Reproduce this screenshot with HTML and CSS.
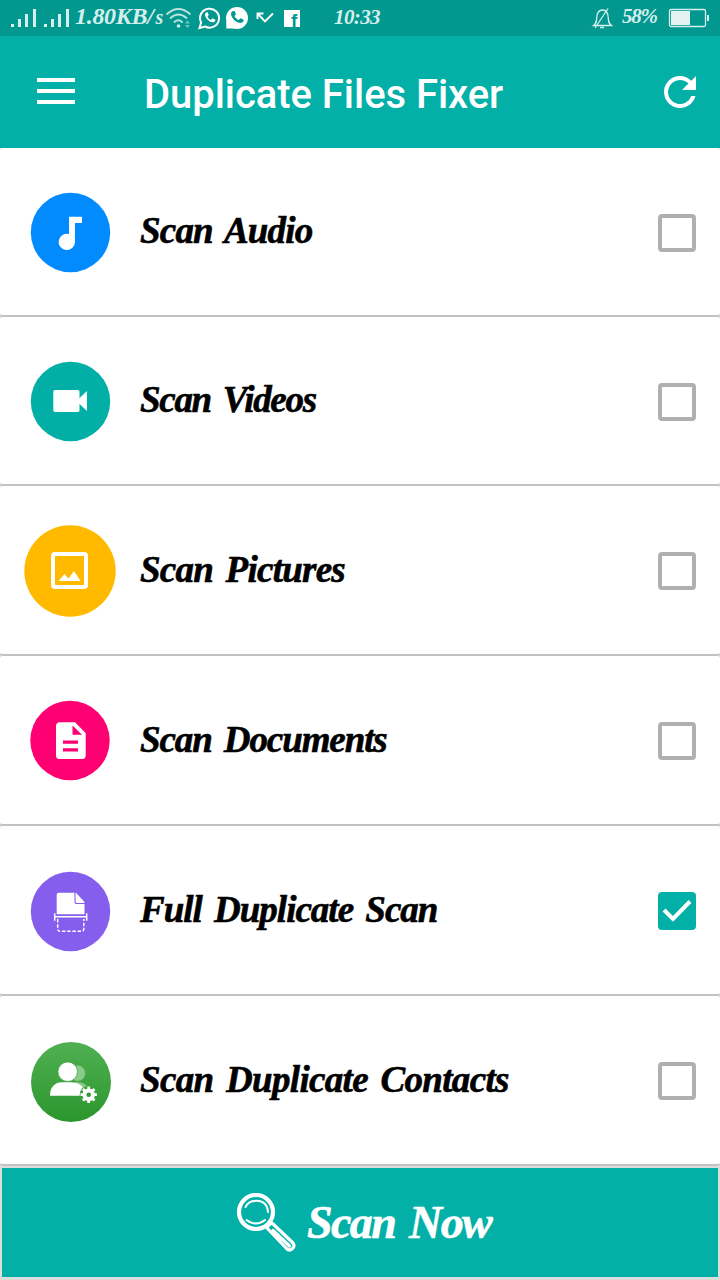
FILE: index.html
```
<!DOCTYPE html>
<html lang="en">
<head>
    <meta charset="UTF-8">
    <title>Duplicate Files Fixer</title>
    <link rel="stylesheet" href="styles.css">
</head>
<body>
    <div class="status-bar">
        <svg class="signals" width="75" height="36" fill="#d5efed">
            <path d="M11 24h3v3h-3zM18 19h3v8h-3zM25 14h3v13h-3zM33 9h3v18h-3zM44 24h3v3h-3zM51 19h3v8h-3zM58 14h3v13h-3zM66 9h3v18h-3z"/>
        </svg>
        <span class="speed">1.80KB/<small>s</small></span>
        <svg class="notifications" width="140" height="36" fill="none">
            <!-- wifi -->
            <g stroke="#b9e3df" stroke-width="1.8" stroke-linecap="round">
                <path d="M3 14Q14.500 4 26 14M6.500 18Q14.500 11 22.500 18M10.500 22Q14.500 18.500 18 22"/>
            </g>
            <circle cx="14.500" cy="26" r="1.800" fill="#d5efed"/>
            <path d="M21 23.500l2.500-3 2.500 3zM21 25l2.500 3 2.500-3z" fill="#6fc3bc"/>
            <!-- whatsapp -->
            <path d="M35.500 28l1.600-5.500A9.500 9.500 0 1 1 41 26.500z" stroke="#fff" stroke-width="2"/>
            <path d="M41.500 13c-2.500 3 4.500 11 8.500 9 2-1 1.500-2 1-2.500l-2.500-1.200-1.800 1.600c-1.500-.5-2.700-2-3.200-3.300l1.200-1.600-1-2.500c-.6-.5-1.600-.3-2.200.5z" fill="#fff"/>
            <!-- phone -->
            <circle cx="73" cy="18" r="11" fill="#fff"/>
            <path d="M62.300 28.500v-8l8 8z" fill="#fff"/>
            <path d="M67.500 12c-2.500 4 5.500 13 10.500 10.500 2-1 2-2.500 1.200-3l-2.700-1.300-2 1.800c-1.700-.6-3.500-2.400-4-4l1.500-1.700-1.200-3c-.8-.6-2.300-.2-3.300.7z" fill="#02978f"/>
            <!-- missed call -->
            <path d="M93.500 19v-5.500h6M94 14l7 7.500 8-8" stroke="#fff" stroke-width="1.900"/>
            <rect x="120" y="10" width="16" height="17" fill="#fff"/>
            <text class="fb" x="127" y="27" fill="#02978f">f</text>
        </svg>
        <span class="clock">10:33</span>
        <svg class="bell" width="26" height="36" fill="none" stroke="#d5efed" stroke-width="1.300">
            <path d="M4.500 25.500c3-2 3-4 3.300-8 .3-5 2.700-7.500 5.700-7.500s5.400 2.500 5.700 7.500c.3 4 .3 6 3.300 8zM6 28L19 8.500M11 27.500h4"/>
        </svg>
        <span class="percent">58%</span>
        <svg class="battery" width="42" height="36">
            <rect x="1.500" y="9.500" width="36" height="17" rx="1.500" fill="none" stroke="#d5efed" stroke-width="1.300"/>
            <path d="M3 11h19v14H3z" fill="#e4f3f2"/>
            <path d="M39 15h2v6h-2z" fill="#d5efed"/>
        </svg>
    </div>

    <div class="toolbar">
        <svg class="menu" width="38" height="26" fill="#fff">
            <path d="M0 0h38v4H0zM0 11h38v4H0zM0 22h38v4H0z"/>
        </svg>
        <h1>Duplicate Files Fixer</h1>
        <svg class="refresh" width="32" height="32" viewBox="4 4 16 16" fill="#fff">
            <path d="M17.650 6.350A7.958 7.958 0 0 0 12 4a8 8 0 1 0 7.730 10h-2.080A6 6 0 1 1 12 6c1.660 0 3.140.69 4.220 1.780L13 11h7V4z"/>
        </svg>
    </div>

    <div class="list">
        <div class="row">
            <svg class="icon" width="92" height="92" fill="#fff">
                <circle cx="46.500" cy="46.500" r="39.700" fill="#028aff"/>
                <path d="M45 30.700h13v6.300h-7v19a8.200 8.200 0 1 1-6-8z"/>
            </svg>
            <span class="label audio">Scan Audio</span>
            <span class="check"></span>
        </div>
        <div class="row">
            <svg class="icon" width="92" height="92" fill="#fff">
                <circle cx="46.500" cy="46.500" r="39.700" fill="#02afa7"/>
                <rect x="29.300" y="35" width="26.200" height="22" rx="1.800"/>
                <path d="M63 36v20l-8-7.500v-5z"/>
            </svg>
            <span class="label videos">Scan Videos</span>
            <span class="check"></span>
        </div>
        <div class="row tall">
            <svg class="icon" width="92" height="94" fill="#fff">
                <circle cx="46" cy="47" r="45.700" fill="#ffba00"/>
                <rect x="29" y="30" width="33" height="33" rx="2" fill="none" stroke="#fff" stroke-width="4"/>
                <path d="M34.500 57l6-7 4 4.500 5.500-7.500 6.500 10z"/>
            </svg>
            <span class="label pictures">Scan Pictures</span>
            <span class="check"></span>
        </div>
        <div class="row tall">
            <svg class="icon" width="92" height="92" fill="#fff">
                <circle cx="46" cy="46.500" r="39.700" fill="#ff0073"/>
                <path d="M35.500 28.300H51L61.700 39v22.500a3.500 3.500 0 0 1-3.500 3.500H35.500a3.500 3.500 0 0 1-3.500-3.500V32a3.500 3.500 0 0 1 3.500-3.700z"/>
                <path d="M48.500 31.500v9.300H58zM39 46.600h15v3.200H39zM39 54.300h15v3.200H39z" fill="#ff0073"/>
            </svg>
            <span class="label documents">Scan Documents</span>
            <span class="check"></span>
        </div>
        <div class="row tall">
            <svg class="icon" width="92" height="92" fill="#fff">
                <circle cx="46.500" cy="47.500" r="39.700" fill="#855eed"/>
                <path d="M34.700 28.700H52L60.500 38v12.300H32.700V30.700a2 2 0 0 1 2-2z"/>
                <path d="M51 28v9.500q0 2 2 2h8" fill="none" stroke="#855eed" stroke-width="1.100"/>
                <path d="M30.700 49.300v7.500M62.700 49.300v7.500M30.700 52.800h32" fill="none" stroke="#fff" stroke-width="1.500"/>
                <path d="M33.700 55v10q0 2.300 2.300 2.300h21.500q2.300 0 2.300-2.300V55" fill="none" stroke="#fff" stroke-width="1.500" stroke-dasharray="3.500 1.700"/>
            </svg>
            <span class="label full">Full Duplicate Scan</span>
            <span class="check checked">
                <svg width="38" height="38" fill="none" stroke="#fff" stroke-width="4"><path d="M6 18l9 9L32 9.500"/></svg>
            </span>
        </div>
        <div class="row tall">
            <svg class="icon" width="92" height="92" fill="#fff">
                <defs>
                    <linearGradient id="green" x1="0" y1="0" x2="0" y2="1">
                        <stop offset="0" stop-color="#50b052"/>
                        <stop offset="1" stop-color="#2b962d"/>
                    </linearGradient>
                </defs>
                <circle cx="47" cy="48" r="40" fill="url(#green)"/>
                <g fill="#89cb8a">
                    <circle cx="53.500" cy="39.300" r="7.700"/>
                    <path d="M51 48q10-1 14 7l-8 2z"/>
                </g>
                <circle cx="43.700" cy="37.700" r="9.800" stroke="#3fa541" stroke-width=".8"/>
                <path d="M26 61.800c0-9 5-13.500 12-13.500h9c7 0 11 3 12.500 7v6.500z"/>
                <circle cx="64.700" cy="60.700" r="9" fill="#37a039"/>
                <circle cx="64.700" cy="60.700" r="4.300" fill="none" stroke="#fff" stroke-width="4"/>
                <!-- gear teeth -->
                <path d="M64.700 52.500v16.400M56.500 60.700h16.400M58.900 54.900l11.600 11.600M70.500 54.900L58.900 66.500" stroke="#fff" stroke-width="2.800"/>
                <circle cx="64.700" cy="60.700" r="2.300" fill="#319b33"/>
            </svg>
            <span class="label contacts">Scan Duplicate Contacts</span>
            <span class="check"></span>
        </div>
    </div>

    <div class="scan-now">
        <svg class="magnifier" width="62" height="60" fill="none" stroke="#fff" stroke-linecap="round">
            <circle cx="21" cy="19" r="17" stroke-width="4.200"/>
            <path d="M10.500 14Q13 8.500 19.500 8M17 8.200Q32 5.500 33 19M11.500 27Q21 34 30 27" stroke-width="2"/>
            <path d="M32.500 33.500l3.500-3.500M32 35L51.500 55.500q3 3 6 0t0-6L37.500 30.500M38 37.500L54.500 53" stroke-width="3.200"/>
        </svg>
        <span>Scan Now</span>
    </div>
</body>
</html>
```
FILE: styles.css
```
* {
    box-sizing: border-box;
}

body {
    margin: 0;
    width: 720px;
    height: 1280px;
    overflow: hidden;
    background: #ddd;
    font-family: "Liberation Serif", serif;
}

svg {
    display: block;
    flex: none;
}

.status-bar {
    display: flex;
    height: 36px;
    background: #02978f;
    color: #d5efed;
    font: italic bold 24px/32px "Liberation Serif", serif;
    white-space: nowrap;
}

.speed {
    width: 89px;
    letter-spacing: -0.3px;
}

.speed small {
    font-size: 20px;
    margin-left: 2px;
}

.fb {
    font: bold 19px "Liberation Sans", sans-serif;
}

.clock {
    width: 50px;
    margin-left: 30px;
    font-size: 21px;
    line-height: 35px;
    letter-spacing: -0.6px;
}

.bell {
    margin-left: 205px;
}

.percent {
    width: 46px;
    margin-left: 7px;
    font-size: 21px;
    letter-spacing: -1.2px;
}

.toolbar {
    display: flex;
    height: 112px;
    background: #02b0a8;
    padding: 0 24px 0 37px;
}

.menu {
    margin-top: 42px;
}

.toolbar h1 {
    flex: 1;
    margin: 3px 0 0 69px;
    color: #fff;
    font: 500 40px/112px Roboto, sans-serif;
    letter-spacing: -0.05px;
    white-space: nowrap;
}

.refresh {
    margin-top: 40px;
}

.row {
    display: flex;
    height: 169px;
    padding: 38px 24px 0;
    background: #fff;
    border-bottom: 2px solid #c1c1c1;
    border-radius: 3px;
}

.row.tall {
    height: 170px;
}

.label {
    flex: 1;
    margin-left: 24px;
    color: #000;
    font-size: 37px;
    line-height: 90px;
    font-style: italic;
    font-weight: bold;
    letter-spacing: -0.8px;
    word-spacing: 4px;
    white-space: nowrap;
    -webkit-text-stroke: 0.6px #000;
}

.tall .label {
    line-height: 92px;
}

.videos { letter-spacing: -1.3px; }
.pictures { letter-spacing: -0.75px; }
.documents { letter-spacing: -1.1px; }
.full { letter-spacing: -1px; }
.contacts { letter-spacing: -0.67px; }

.check {
    width: 38px;
    height: 38px;
    margin-top: 28px;
    border: 4px solid #b0b0b0;
    border-radius: 4px;
}

.check.checked {
    border: none;
    background: #02b0a8;
}

.scan-now {
    display: flex;
    height: 109px;
    margin: 2px 2px 0;
    padding: 25px 0 0 233px;
    background: #02b0a8;
    color: #fff;
    font-size: 46px;
    line-height: 59px;
    font-style: italic;
    font-weight: bold;
    letter-spacing: -1.6px;
    word-spacing: 4px;
    white-space: nowrap;
    -webkit-text-stroke: 0.6px #fff;
}

.magnifier {
    margin-right: 10px;
}
```
